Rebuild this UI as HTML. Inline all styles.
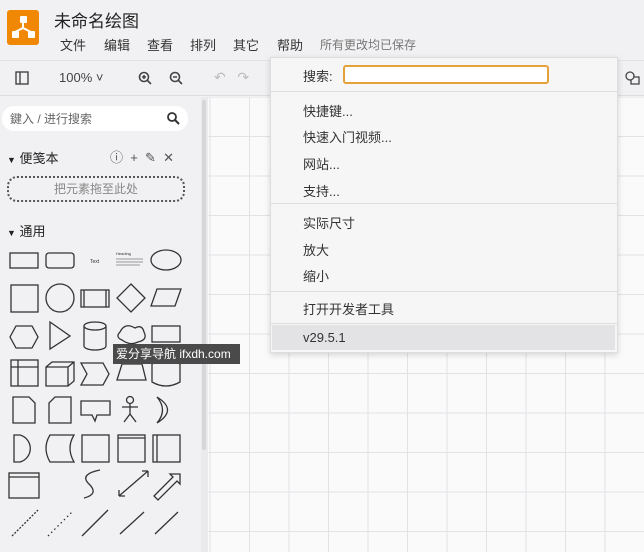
<!DOCTYPE html><html><head><meta charset="utf-8"><style>
*{margin:0;padding:0;box-sizing:border-box}
body{width:644px;height:552px;overflow:hidden;background:#f1f1f3;font-family:"Liberation Sans","Noto Sans CJK SC",sans-serif;color:#333;position:relative}
.a{position:absolute;white-space:nowrap}
.mb{position:absolute;top:35px;font-size:13px;color:#333}
.mi{position:absolute;left:303px;font-size:13px;color:#333}
.sep{position:absolute;left:271px;width:346px;height:1px;background:#ddd}
</style></head><body>
<div class="a" style="left:7px;top:10px;width:32px;height:35px;background:#f08705;border-radius:3px"></div>
<svg class="a" style="left:7px;top:10px" width="32" height="35"><g fill="#fff"><rect x="13" y="6" width="7" height="7" rx="1"/><rect x="5" y="21" width="7" height="7" rx="1"/><rect x="21" y="21" width="7" height="7" rx="1"/></g><path d="M16 13V18M8 22L16 18L24 22" stroke="#fff" stroke-width="2" fill="none"/></svg>
<div class="a" style="left:54px;top:7px;font-size:17px;color:#222">未命名绘图</div>
<div class="mb" style="left:60px">文件</div><div class="mb" style="left:104px">编辑</div><div class="mb" style="left:147px">查看</div><div class="mb" style="left:190px">排列</div><div class="mb" style="left:233px">其它</div><div class="mb" style="left:277px">帮助</div>
<div class="a" style="left:320px;top:36px;font-size:12px;color:#777">所有更改均已保存</div>
<div class="a" style="left:0;top:60px;width:644px;height:36px;border-top:1px solid #e2e2e2;border-bottom:1px solid #ddd;background:#f1f1f3"></div>
<svg class="a" style="left:14px;top:70px" width="16" height="16"><rect x="2" y="2" width="12" height="12" fill="none" stroke="#444" stroke-width="1.4"/><path d="M6 2V14" stroke="#444" stroke-width="1.4"/></svg>
<div class="a" style="left:59px;top:70px;font-size:13px;color:#444">100% ˅</div>
<svg class="a" style="left:137px;top:70px" width="60" height="16"><g fill="none" stroke="#444" stroke-width="1.6"><circle cx="7" cy="7" r="4.5"/><path d="M10.5 10.5L14 14M5 7H9M7 5V9"/><circle cx="38" cy="7" r="4.5"/><path d="M41.5 10.5L45 14M36 7H40"/></g></svg>
<div class="a" style="left:214px;top:69px;font-size:14px;color:#bbb">↶&nbsp;&nbsp;&nbsp;↷</div>
<svg class="a" style="left:624px;top:70px" width="18" height="16"><circle cx="6" cy="6" r="4" fill="none" stroke="#444" stroke-width="1.3"/><path d="M10 7H15V14H7V10" fill="none" stroke="#444" stroke-width="1.3"/></svg>
<div class="a" style="left:208px;top:97px;width:436px;height:455px;background-color:#fafafb;background-image:linear-gradient(#e3e3e6 1px,transparent 1px),linear-gradient(90deg,#e3e3e6 1px,transparent 1px);background-size:39.5px 39.5px;background-position:41px 39px"></div>
<div class="a" style="left:201px;top:97px;width:7px;height:455px;background:#eaeaec"></div>
<div class="a" style="left:202px;top:100px;width:4px;height:350px;background:#d6d6d8;border-radius:2px"></div>
<div class="a" style="left:2px;top:106px;width:186px;height:25px;background:#fff;border-radius:12px"></div>
<div class="a" style="left:10px;top:110px;font-size:12px;color:#666">鍵入 / 进行搜索</div>
<svg class="a" style="left:166px;top:111px" width="14" height="14"><circle cx="6" cy="6" r="4" fill="none" stroke="#333" stroke-width="1.8"/><path d="M9 9L13 13" stroke="#333" stroke-width="2"/></svg>
<div class="a" style="left:7px;top:148px;font-size:13px;color:#222"><span style="font-size:9px">▼</span> 便笺本</div>
<div class="a" style="left:110px;top:147px;font-size:13px;color:#555">ⓘ&nbsp;&nbsp;+&nbsp;&nbsp;✎&nbsp;&nbsp;✕</div>
<div class="a" style="left:7px;top:176px;width:178px;height:26px;border:2px dotted #555;border-radius:10px;text-align:center;font-size:12px;color:#888;line-height:22px">把元素拖至此处</div>
<div class="a" style="left:7px;top:221px;font-size:13px;color:#222"><span style="font-size:9px">▼</span> 通用</div>
<svg class="a" style="left:0;top:240px" width="200" height="312"><g fill="none" stroke="#333" stroke-width="1.3">
<rect x="10" y="13" width="28" height="15"/><rect x="46" y="13" width="28" height="15" rx="3"/><ellipse cx="166" cy="20" rx="15" ry="10"/>
<rect x="11" y="45" width="27" height="27"/><circle cx="60" cy="58" r="14"/><rect x="81" y="50" width="28" height="17"/><path d="M84 50V67M106 50V67"/><path d="M131 44L145 58L131 72L117 58Z"/><path d="M157 49H181L175 66H151Z"/>
<path d="M10 97L16 86H32L38 97L32 108H16Z"/><path d="M50 82L70 96L50 109Z"/><path d="M84 86V106A11 4 0 0 0 106 106V86A11 4 0 0 0 84 86A11 4 0 0 0 106 86"/><path d="M120 92Q125 82 135 88Q142 84 144 92Q148 100 138 102Q130 106 122 100Q115 97 120 92Z"/><rect x="152" y="86" width="28" height="16"/>
<rect x="11" y="120" width="27" height="26"/><path d="M11 127H38M18 120V146"/><path d="M46 127L52 122H74V141L68 146H46Z M46 127H68V146M68 127L74 122"/><path d="M81 123H103L109 134L103 145H81L87 134Z"/><path d="M122 124H142L146 140H117Z"/><path d="M152 124Q166 116 180 124V142Q166 150 152 142Z"/>
<path d="M13 157H29L35 163V183H13Z"/><path d="M55 157H71V183H49V163Z"/><path d="M81 161H110V175H97L95 181L92 175H81Z"/><circle cx="130" cy="160" r="3.5"/><path d="M130 164V174M122 167H138M130 174L124 182M130 174L136 182"/><path d="M157 157Q178 170 157 183Q168 170 157 157Z"/>
<path d="M14 195H20A14 14 0 0 1 20 222H14Z"/><path d="M50 195H74Q66 208 74 222H50Q42 208 50 195Z"/><rect x="82" y="195" width="27" height="27"/><rect x="118" y="195" width="27" height="27"/><path d="M118 198H145"/><rect x="153" y="195" width="27" height="27"/><path d="M157 195V222"/>
<rect x="9" y="233" width="30" height="25"/><path d="M9 237H39"/><path d="M84 258Q100 254 88 243Q80 234 100 230"/><path d="M119 256L148 231M119 256V250M119 256H125M148 231V237M148 231H142"/><path d="M154 256L173 237L170 234H180V244L177 241L158 260Z"/>
<path d="M12 296L38 270" stroke-dasharray="2 1.5"/><path d="M48 296L72 272" stroke-dasharray="1.5 3"/><path d="M82 296L108 270"/><path d="M120 294L144 272"/><path d="M155 294L178 272"/></g>
<text x="90" y="23" font-size="5" fill="#333">Text</text><text x="116" y="15" font-size="4" fill="#333">Heading</text><path d="M116 19H143M116 22H143M116 25H140" stroke="#999" stroke-width="1"/></svg>
<div class="a" style="left:113px;top:344px;width:127px;height:20px;background:#4a4a4a;color:#fff;font-size:12px;line-height:20px;padding-left:3px">爱分享导航 ifxdh.com</div>
<div class="a" style="left:270px;top:57px;width:348px;height:296px;background:#f6f6f7;border:1px solid #ddd;box-shadow:0 2px 6px rgba(0,0,0,.15)"></div>
<div class="mi" style="top:66px">搜索:</div>
<div class="a" style="left:343px;top:65px;width:206px;height:19px;background:#fff;border:2px solid #e5a23a;border-radius:3px"></div>
<div class="sep" style="top:91px"></div>
<div class="mi" style="top:101px">快捷键...</div>
<div class="mi" style="top:127px">快速入门视频...</div>
<div class="mi" style="top:154px">网站...</div>
<div class="mi" style="top:181px">支持...</div>
<div class="sep" style="top:203px"></div>
<div class="mi" style="top:213px">实际尺寸</div>
<div class="mi" style="top:240px">放大</div>
<div class="mi" style="top:266px">缩小</div>
<div class="sep" style="top:291px"></div>
<div class="mi" style="top:299px">打开开发者工具</div>
<div class="sep" style="top:323px"></div>
<div class="a" style="left:272px;top:325px;width:343px;height:25px;background:#e3e3e6"></div>
<div class="mi" style="top:330px">v29.5.1</div>
</body></html>
